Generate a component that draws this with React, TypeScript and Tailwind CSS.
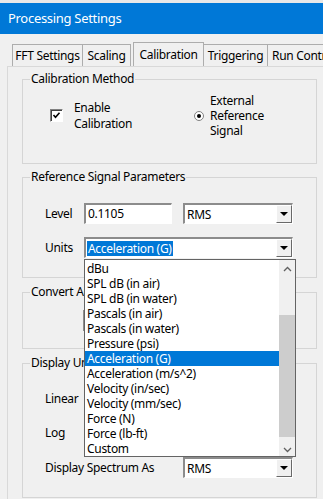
import React from 'react';

const units = [
  'dBu',
  'SPL dB (in air)',
  'SPL dB (in water)',
  'Pascals (in air)',
  'Pascals (in water)',
  'Pressure (psi)',
  'Acceleration (G)',
  'Acceleration (m/s^2)',
  'Velocity (in/sec)',
  'Velocity (mm/sec)',
  'Force (N)',
  'Force (lb-ft)',
  'Custom',
];

function DropButton() {
  return (
    <div className="flex h-full w-[16px] items-center justify-center border-t border-l border-white border-r border-b border-r-[#696969] border-b-[#696969] bg-[#f0f0f0]">
      <div className="h-0 w-0 border-x-[4px] border-t-[4px] border-x-transparent border-t-black" />
    </div>
  );
}

function Combo({ value, width, selected }: { value: string; width: string; selected?: boolean }) {
  return (
    <div className={`flex h-[21px] ${width} border-t-2 border-l-2 border-t-[#8c8c8c] border-l-[#8c8c8c] border-r border-b border-r-white border-b-white bg-white`}>
      <div className="flex flex-1 items-center pl-[1px]">
        <span className={selected ? 'bg-[#0078d7] px-[1px] text-white leading-[15px]' : 'px-[1px] leading-[15px]'}>{value}</span>
      </div>
      <DropButton />
    </div>
  );
}

function Group({ title, className, children }: { title: string; className: string; children?: React.ReactNode }) {
  return (
    <fieldset className={`border border-[#d5d5d5] ${className}`}>
      <legend className="ml-[7px] px-[1px] leading-[16px]">{title}</legend>
      {children}
    </fieldset>
  );
}

const tabBase = 'flex h-[22px] shrink-0 items-center justify-center whitespace-nowrap border border-b-0 border-[#adadad] bg-[#f0f0f0]';

export default function App() {
  return (
    <div className="h-[499px] w-[323px] overflow-hidden bg-[#f0f0f0] text-[12px] tracking-[-0.3px] text-black" style={{ fontFamily: '"Noto Sans", sans-serif' }}>
      <div className="h-[3px] bg-[#e8e8e8]" />
      <div className="flex h-[31px] items-center bg-[#0078d7] pl-[8px] text-[13px] text-white">Processing Settings</div>

      {/* tabs */}
      <div className="flex h-[32px] items-end overflow-hidden pl-[12px]">
        <div className={`${tabBase} w-[71px]`}>FFT Settings</div>
        <div className={`${tabBase} w-[48px] border-l-0`}>Scaling</div>
        <div className="relative z-10 -mb-[1px] ml-[2px] flex h-[25px] w-[71px] shrink-0 items-center justify-center whitespace-nowrap border border-b-0 border-[#adadad] bg-[#f0f0f0]">Calibration</div>
        <div className={`${tabBase} w-[64px] border-l-0`}>Triggering</div>
        <div className={`${tabBase} w-[70px] justify-start border-l-0 pl-[4px]`}>Run Control</div>
      </div>

      {/* tab page */}
      <div className="ml-[7px] h-[440px] w-[330px] border border-[#d9d9d9] bg-[#f0f0f0] pl-[14px] pt-[4px]">
        <Group title="Calibration Method" className="h-[93px] w-[295px]">
          <div className="flex items-center pl-[27px] pt-[6px]">
            <div className="flex w-[144px] items-center">
              <div className="flex h-[13px] w-[13px] items-center justify-center border-t border-l border-[#808080] border-r border-b border-r-white border-b-white bg-white shadow-[inset_1px_1px_0_#404040]">
                <svg width="9" height="9" viewBox="0 0 9 9">
                  <path d="M1.5 4 L3.5 6.2 L7.5 1.8" fill="none" stroke="black" strokeWidth="1.6" />
                </svg>
              </div>
              <div className="ml-[11px] leading-[16px]">
                <div>Enable</div>
                <div>Calibration</div>
              </div>
            </div>
            <div className="flex items-center">
              <div className="flex h-[10px] w-[10px] items-center justify-center rounded-full border border-[#808080] bg-white">
                <div className="h-[4px] w-[4px] rounded-full bg-black" />
              </div>
              <div className="ml-[6px] leading-[15px]">
                <div>External</div>
                <div>Reference</div>
                <div>Signal</div>
              </div>
            </div>
          </div>
        </Group>

        <Group title="Reference Signal Parameters" className="mt-[5px] h-[109px] w-[295px]">
          <div className="pl-[22px] pt-[18px]">
            <div className="flex h-[21px] items-center">
              <div className="w-[39px]">Level</div>
              <div className="flex h-[21px] w-[88px] items-center border-t-2 border-l-2 border-t-[#8c8c8c] border-l-[#8c8c8c] border-r border-b border-r-white border-b-white bg-white pl-[2px]">0.1105</div>
              <div className="ml-[11px]">
                <Combo value="RMS" width="w-[110px]" />
              </div>
            </div>
            <div className="relative mt-[13px] flex h-[21px] items-center">
              <div className="w-[39px]">Units</div>
              <Combo value="Acceleration (G)" width="w-[209px]" selected />

              {/* open dropdown list */}
              <div className="absolute left-[39px] top-[22px] z-20 flex h-[198px] w-[212px] border border-[#646464] bg-white">
                <div className="flex-1 pt-[1px]">
                  {units.map((u) => (
                    <div key={u} className={u === 'Acceleration (G)' ? 'h-[15px] bg-[#0078d7] pl-[2px] leading-[15px] text-white' : 'h-[15px] pl-[2px] leading-[15px]'}>
                      {u}
                    </div>
                  ))}
                </div>
                <div className="flex w-[16px] flex-col bg-[#f0f0f0]">
                  <div className="flex h-[17px] items-center justify-center">
                    <svg width="9" height="6" viewBox="0 0 9 6">
                      <path d="M1 5 L4.5 1.5 L8 5" fill="none" stroke="#606060" strokeWidth="1.3" />
                    </svg>
                  </div>
                  <div className="mt-[38px] h-[122px] bg-[#cdcdcd]" />
                  <div className="flex flex-1 items-end justify-center pb-[3px]">
                    <svg width="9" height="6" viewBox="0 0 9 6">
                      <path d="M1 1 L4.5 4.5 L8 1" fill="none" stroke="#606060" strokeWidth="1.3" />
                    </svg>
                  </div>
                </div>
              </div>
            </div>
          </div>
        </Group>

        <Group title="Convert Amplitude" className="mt-[6px] h-[65px] w-[295px]">
          <div className="pl-[60px] pt-[10px]">
            <div className="h-[21px] w-[150px] border-t-2 border-l-2 border-[#8c8c8c] bg-white" />
          </div>
        </Group>

        <Group title="Display Units" className="mt-[6px] h-[143px] w-[295px]">
          <div className="pl-[22px] pt-[17px]">
            <div className="flex h-[21px] items-center">Linear</div>
            <div className="mt-[13px] flex h-[21px] items-center">Log</div>
            <div className="mt-[14px] flex h-[21px] items-center">
              <div className="w-[138px]">Display Spectrum As</div>
              <Combo value="RMS" width="w-[110px]" />
            </div>
          </div>
        </Group>
      </div>
    </div>
  );
}
